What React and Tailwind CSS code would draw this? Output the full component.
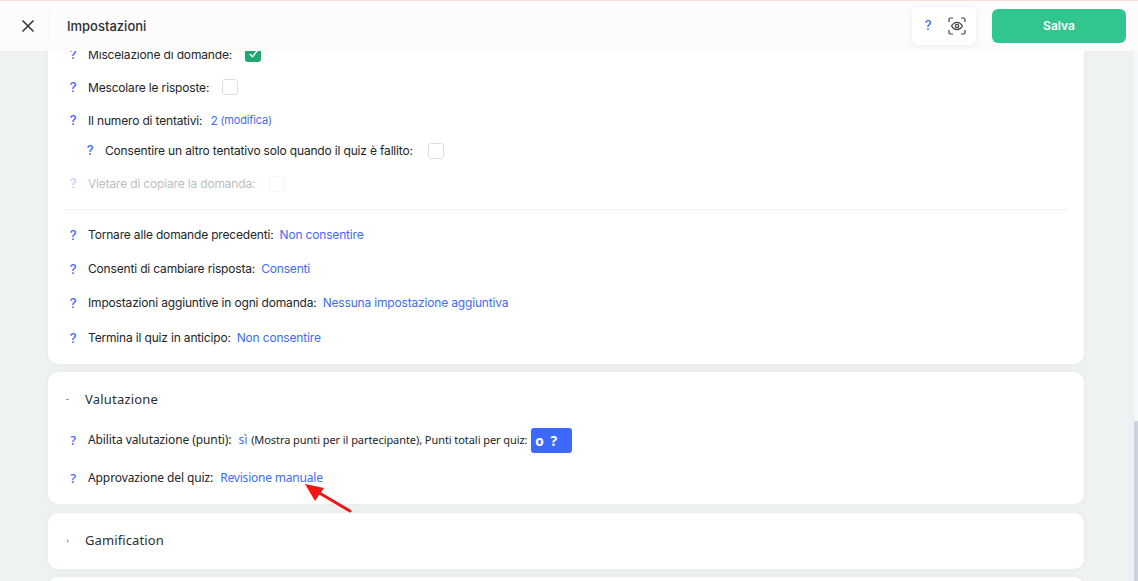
import { FiX } from "react-icons/fi";

const Help = ({ className = "" }) => (
  <span className={`w-[10px] text-center text-[13px] font-medium leading-none text-[#3d6bff] ${className}`}>?</span>
);

const Box = ({ className = "" }) => (
  <span className={`block h-4 w-4 rounded-[3px] border border-[#dcdfe3] bg-white ${className}`} />
);

const links = [
  { label: "Tornare alle domande precedenti:", value: "Non consentire", h: "h-[34px]" },
  { label: "Consenti di cambiare risposta:", value: "Consenti", h: "h-[34px]" },
  { label: "Impostazioni aggiuntive in ogni domanda:", value: "Nessuna impostazione aggiuntiva", h: "h-[34px]" },
  { label: "Termina il quiz in anticipo:", value: "Non consentire", h: "h-[36px]" },
];

function Row({ children, className = "" }) {
  return (
    <div className={`flex items-center pl-[20px] ${className}`}>
      <Help className="mr-[10px]" />
      {children}
    </div>
  );
}

export default function App() {
  return (
    <div className="flex h-[581px] w-[1138px] flex-col overflow-hidden bg-[#eef2f3] font-['Inter',sans-serif] text-[12px] tracking-[-0.17px] text-[#222529]">
      <div className="h-px bg-[#f8e0d8]" />
      <header className="z-10 flex h-[50px] items-center bg-[#fcfcfd]">
        <div className="flex h-[33px] w-[50px] items-center justify-center border-r border-[#f0f1f3] pl-[6px]">
          <FiX className="h-[20px] w-[20px] text-[#33363b]" />
        </div>
        <h1 className="ml-[17px] mt-px text-[13px] font-medium tracking-normal text-[#2b2f36]">Impostazioni</h1>
        <div className="ml-auto flex h-[38px] w-[64px] items-center justify-between rounded-md bg-white pl-[12px] pr-[10px] shadow-[0_1px_6px_rgba(30,50,90,0.08)]">
          <span className="w-[8px] text-center text-[13px] font-medium text-[#3d6bff]">?</span>
          <svg width="18" height="18" viewBox="0 0 18 18" fill="none" stroke="#3c4048" strokeWidth="1.2">
            <path d="M1 5V2.5A1.5 1.5 0 0 1 2.5 1H5M13 1h2.500A1.500 1.500 0 0 1 17 2.500V5M17 13v2.500a1.500 1.500 0 0 1-1.500 1.500H13M5 17H2.500A1.500 1.500 0 0 1 1 15.500V13" />
            <path d="M3.500 9C5 6.600 6.800 5.400 9 5.400s4 1.200 5.500 3.600c-1.500 2.400-3.300 3.600-5.500 3.600S5 11.400 3.500 9Z" />
            <circle cx="9" cy="9" r="1.700" />
          </svg>
        </div>
        <button className="ml-[16px] mr-[12px] h-[34px] w-[134px] rounded-md bg-[#32c68f] text-[12px] font-semibold tracking-normal text-white">Salva</button>
      </header>

      <div className="relative min-h-0 flex-1 overflow-hidden">
        <main className="flex w-[1036px] translate-x-[48px] flex-col gap-[8px]">
          <section className="-mt-[13px] rounded-b-[10px] bg-white pb-[8px] pt-0 shadow-[0_0_6px_rgba(30,50,70,0.04)]">
            <Row className="h-[33px]">
              <span>Miscelazione di domande:</span>
              <span className="mb-[2px] ml-[13px] flex h-4 w-4 items-center justify-center rounded-[3px] bg-[#1fa971]">
                <svg width="11" height="11" viewBox="0 0 12 12" fill="none" stroke="white" strokeWidth="1.500">
                  <path d="M2 6.500 5 9.500 10 3" />
                </svg>
              </span>
            </Row>
            <Row className="h-[33px]">
              <span>Mescolare le risposte:</span>
              <Box className="mb-[2px] ml-[13px]" />
            </Row>
            <Row className="h-[33px]">
              <span>Il numero di tentativi:</span>
              <span className="ml-[8px] text-[#3d6bff]">2</span>
              <span className="ml-[3px] text-[11px] text-[#3d6bff]">(modifica)</span>
            </Row>
            <Row className="h-[27px] pl-[37px]">
              <span>Consentire un altro tentativo solo quando il quiz è fallito:</span>
              <Box className="ml-[15px]" />
            </Row>
            <Row className="mt-[2px] h-[35px] opacity-30">
              <span>Vietare di copiare la domanda:</span>
              <Box className="ml-[14px]" />
            </Row>
            <div className="mx-[16px] mb-[8px] mt-[8px] h-px bg-[#f0f1f3]" />
            {links.map((item) => (
              <Row key={item.label} className={item.h}>
                <span>{item.label}</span>
                <span className="ml-[6px] text-[#3d6bff]">{item.value}</span>
              </Row>
            ))}
          </section>

          <section className="relative h-[132px] rounded-[10px] bg-white font-['Noto_Sans',sans-serif] tracking-[-0.1px] shadow-[0_0_6px_rgba(30,50,70,0.04)]">
            <div className="flex h-[55px] items-center pl-[18px]">
              <span className="mr-[16px] h-px w-[3px] bg-[#9aa0a6]" />
              <h2 className="text-[13px] font-normal tracking-[0.2px] text-[#2b2f36]">Valutazione</h2>
            </div>
            <Row className="h-[26px]">
              <span>Abilita valutazione (punti):</span>
              <span className="ml-[7px] text-[#3d6bff]">sì</span>
              <span className="ml-[4px] text-[11px] tracking-[-0.07px]">(Mostra punti per il partecipante), Punti totali per quiz:</span>
              <span className="ml-[4px] flex h-[25px] w-[41px] items-center gap-[7px] rounded-[3px] bg-[#3d68ff] pl-[4px] text-[14px] font-bold text-white">
                <span className="oldstyle-nums">0</span>
                <span>?</span>
              </span>
            </Row>
            <Row className="mt-[12px] h-[26px]">
              <span>Approvazione del quiz:</span>
              <span className="ml-[7px] tracking-[-0.2px] text-[#3d6bff]">Revisione manuale</span>
            </Row>
            <svg className="absolute left-[254px] top-[110px]" width="52" height="32" viewBox="0 0 52 32" fill="none">
              <path d="M48 29 14 9" stroke="#f01616" strokeWidth="3" strokeLinecap="round" />
              <path d="M3 2 22 6 13 19Z" fill="#f01616" />
            </svg>
          </section>

          <section className="mt-px h-[56px] rounded-[10px] bg-white font-['Noto_Sans',sans-serif] shadow-[0_0_6px_rgba(30,50,70,0.04)]">
            <div className="flex h-full items-center pl-[19px]">
              <span className="mr-[16px] h-0 w-0 border-y-[2px] border-l-[2px] border-y-transparent border-l-[#9aa0a6]" />
              <h2 className="text-[13px] font-normal tracking-[0.1px] text-[#2b2f36]">Gamification</h2>
            </div>
          </section>

          <section className="h-[56px] rounded-[10px] bg-white shadow-[0_0_6px_rgba(30,50,70,0.04)]" />
        </main>

        <div className="absolute inset-y-0 right-0 w-[4px] bg-[#f5f9fc]">
          <div className="ml-0 mt-[370px] h-[160px] bg-[#cbd3df]" />
        </div>
      </div>
    </div>
  );
}
